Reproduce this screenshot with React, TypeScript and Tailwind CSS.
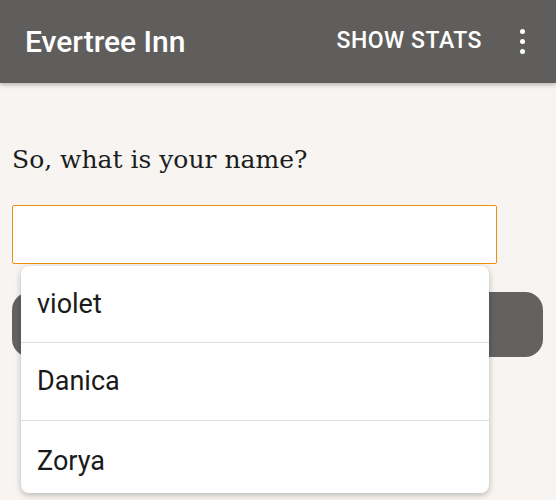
import React from 'react';

const names = ['violet', 'Danica', 'Zorya'];

const App: React.FC = () => {
  return (
    <div className="min-h-screen w-full bg-[#f7f4f1] overflow-hidden" style={{ fontFamily: 'Roboto, sans-serif' }}>
      <header className="h-[83px] bg-[#5f5e5c] flex items-center pl-[25px] pr-[31px] shadow-[0_2px_4px_rgba(0,0,0,0.25)] relative z-10">
        <h1 className="text-[30px] font-medium text-white flex-1">Evertree Inn</h1>
        <button className="text-[23px] font-medium text-white tracking-[0.5px] mr-[38px]">SHOW STATS</button>
        <div className="flex flex-col gap-[5px] items-center">
          <span className="w-[5px] h-[5px] rounded-full bg-white" />
          <span className="w-[5px] h-[5px] rounded-full bg-white" />
          <span className="w-[5px] h-[5px] rounded-full bg-white" />
        </div>
      </header>

      <main className="px-[12px] pt-[61px] relative">
        <p className="text-[25px] text-[#1c1c1c] leading-[32px]" style={{ fontFamily: '"DejaVu Serif", serif' }}>
          So, what is your name?
        </p>
        <div className="mt-[29px] w-[485px] h-[59px] bg-white border border-[#ef8e0b] rounded-[2px]" />
        <button className="mt-[28px] w-[531px] h-[65px] bg-[#636260] rounded-[18px]" />

        <ul className="absolute left-[21px] top-[183px] w-[468px] bg-white rounded-[8px] shadow-[0_2px_6px_rgba(0,0,0,0.25)]">
          {names.map((n, i) => (
            <li
              key={n}
              className={`flex items-center pl-[16px] text-[27px] text-[#1a1a1a] ${
                i === 0 ? 'h-[76px]' : i === 1 ? 'h-[78px] border-t border-[#dedede]' : 'h-[73px] border-t border-[#dedede] pt-[9px]'
              }`}
            >
              {n}
            </li>
          ))}
        </ul>
      </main>
    </div>
  );
};

export default App;
